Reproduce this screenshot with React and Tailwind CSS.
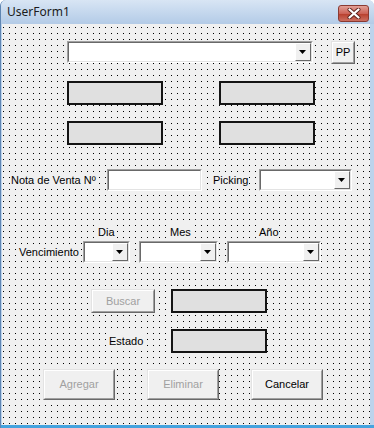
import React from "react";

const font = "font-['Liberation_Sans',Arial,sans-serif]";

function DropArrow() {
  return (
    <div className="w-[16px] h-full shrink-0 bg-[#f0f0f0] border border-t-white border-l-white border-b-[#696969] border-r-[#696969] flex items-center justify-center">
      <svg width="8" height="4" viewBox="0 0 8 4">
        <path d="M0 0 H7 L3.5 4 Z" fill="#000" />
      </svg>
    </div>
  );
}

function Combo({ w }) {
  return (
    <div className={`${w} h-[22px] shrink-0 border border-t-[#a0a0a0] border-l-[#a0a0a0] border-b-white border-r-white`}>
      <div className="h-full bg-white border border-t-[#696969] border-l-[#696969] border-b-[#e3e3e3] border-r-[#e3e3e3] flex justify-end">
        <DropArrow />
      </div>
    </div>
  );
}

function TextBox({ w }) {
  return (
    <div className={`${w} h-[22px] shrink-0 border border-t-[#a0a0a0] border-l-[#a0a0a0] border-b-white border-r-white`}>
      <div className="h-full bg-white border border-t-[#696969] border-l-[#696969] border-b-[#e3e3e3] border-r-[#e3e3e3]" />
    </div>
  );
}

function GrayBox({ className = "" }) {
  return <div className={`w-[96px] h-[24px] shrink-0 bg-[#e0e0e0] border-2 border-[#141414] ${className}`} />;
}

function Label({ text, w }) {
  return (
    <div className={`${w} shrink-0`}>
      <span className="bg-[#f0f0f0] py-[2px]">{text}</span>
    </div>
  );
}

function Btn({ label, w = "w-[72px]", h = "h-[31px]", disabled, className = "" }) {
  return (
    <div className={`${w} ${h} shrink-0 border border-t-[#e3e3e3] border-l-[#e3e3e3] border-b-[#696969] border-r-[#696969] ${className}`}>
      <div className={`h-full bg-[#f0f0f0] border border-t-white border-l-white border-b-[#a0a0a0] border-r-[#a0a0a0] flex items-center justify-center text-[11px] ${disabled ? "text-[#a0a0a0]" : "text-black"}`}>
        {label}
      </div>
    </div>
  );
}

export default function App() {
  return (
    <div className={`w-[374px] h-[428px] bg-white ${font}`}>
      <div className="w-full h-full flex flex-col rounded-t-[6px] overflow-hidden border-l border-[#5f86b3] bg-[#bcd3ec]">
        {/* Title bar */}
        <div className="h-[24px] shrink-0 flex items-center justify-between pl-[6px] pr-[5px] bg-[linear-gradient(to_bottom,#d8e5f4,#b3cbe7)]">
          <span className="text-[12px] text-[#1b1b1b] font-['Noto_Sans',sans-serif] leading-none">UserForm1</span>
          <div className="w-[31px] h-[17px] mt-[2px] rounded-[3px] border border-[#8a3a32] bg-[linear-gradient(to_bottom,#e2a097,#cc6357_50%,#b9412f_55%,#cc6f60)] flex items-center justify-center">
            <svg width="14" height="11" viewBox="0 0 14 11">
              <path d="M2.5 1.5 L11.5 9.5 M11.5 1.5 L2.5 9.5" stroke="#5a2019" strokeWidth="4" strokeLinecap="round" />
              <path d="M2.5 1.5 L11.5 9.5 M11.5 1.5 L2.5 9.5" stroke="#fff" strokeWidth="2.3" strokeLinecap="round" />
            </svg>
          </div>
        </div>

        {/* Client area */}
        <div className="flex-1 flex pl-[1px] pr-[4px] pb-[3px] bg-[linear-gradient(to_bottom,#bcd3ec_calc(100%-3px),#45a3de_calc(100%-3px))]">
          <div className="flex-1 bg-[#f0f0f0] bg-[linear-gradient(to_bottom,transparent_1px,#f0f0f0_1px),linear-gradient(to_right,#000_1px,transparent_1px)] [background-size:6px_6px] [background-position:1px_3px] text-[11px] text-black">
            {/* Row 1 */}
            <div className="mt-[17px] h-[23px] flex items-start">
              <Combo w="ml-[65px] w-[246px]" />
              <Btn label="PP" w="ml-[18px] w-[24px]" h="h-[23px]" />
            </div>

            {/* Row 2 */}
            <div className="mt-[17px] flex">
              <GrayBox className="ml-[65px]" />
              <GrayBox className="ml-[56px]" />
            </div>

            {/* Row 3 */}
            <div className="mt-[16px] flex">
              <GrayBox className="ml-[65px]" />
              <GrayBox className="ml-[56px]" />
            </div>

            {/* Nota de venta */}
            <div className="mt-[24px] h-[22px] flex items-center">
              <Label text="Nota de Venta Nº" w="ml-[9px] w-[96px]" />
              <TextBox w="w-[95px]" />
              <Label text="Picking" w="ml-[11px] w-[46px]" />
              <Combo w="w-[93px]" />
            </div>

            {/* Fecha labels */}
            <div className="mt-[34px] h-[14px] flex items-center">
              <Label text="Dia" w="ml-[96px] w-[72px]" />
              <Label text="Mes" w="w-[89px]" />
              <Label text="Año" w="w-[40px]" />
            </div>

            {/* Vencimiento */}
            <div className="mt-[2px] h-[22px] flex items-center">
              <Label text="Vencimiento" w="ml-[17px] w-[64px]" />
              <Combo w="w-[47px]" />
              <Combo w="ml-[9px] w-[79px]" />
              <Combo w="ml-[9px] w-[94px]" />
            </div>

            {/* Buscar */}
            <div className="mt-[26px] flex">
              <Btn label="Buscar" w="ml-[89px] w-[64px]" h="h-[24px]" disabled />
              <GrayBox className="ml-[16px]" />
            </div>

            {/* Estado */}
            <div className="mt-[16px] flex items-center">
              <Label text="Estado" w="ml-[107px] w-[62px]" />
              <GrayBox />
            </div>

            {/* Botones */}
            <div className="mt-[16px] flex">
              <Btn label="Agregar" w="ml-[41px] w-[72px]" disabled />
              <Btn label="Eliminar" w="ml-[32px] w-[72px]" disabled />
              <Btn label="Cancelar" w="ml-[32px] w-[72px]" />
            </div>
          </div>
        </div>
      </div>
    </div>
  );
}
